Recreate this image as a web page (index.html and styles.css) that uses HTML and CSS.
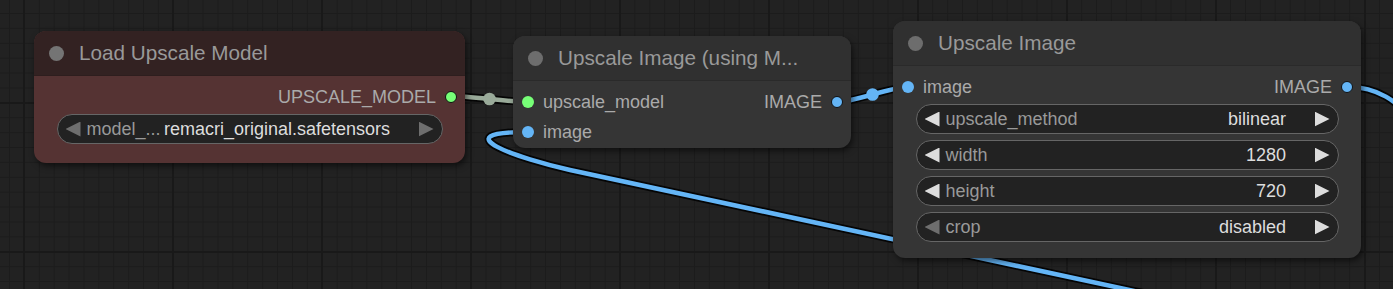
FILE: index.html
```html
<!DOCTYPE html>
<html>
<head>
<meta charset="utf-8">
<link rel="stylesheet" href="styles.css">
</head>
<body>
<div class="canvas">
  <svg class="links" width="1393" height="289" viewBox="0 0 1393 289">
    <g fill="none" stroke-linecap="round">
      <path class="edge" d="M528,132 C440,132 520,159 570,170 L1400,348"/>
      <path class="wire blue-w" d="M528,132 C440,132 520,159 570,170 L1400,348"/>
      <path class="edge" d="M451,96 C470,96 509,102 528,102"/>
      <path class="wire gray-w" d="M451,96 C470,96 509,102 528,102"/>
      <path class="edge" d="M837,102 C855,102 890,87 908,87"/>
      <path class="wire blue-w" d="M837,102 C855,102 890,87 908,87"/>
      <path class="edge" d="M1348,87 C1378,87 1395,100 1420,125"/>
      <path class="wire blue-w" d="M1348,87 C1378,87 1395,100 1420,125"/>
    </g>
    <circle class="marker gray-m" cx="489.5" cy="99" r="6.3"/>
    <circle class="marker blue-m" cx="872.5" cy="94.5" r="6.3"/>
  </svg>

  <div class="node red n1">
    <div class="title"><span class="tdot"></span><span class="ttext">Load Upscale Model</span></div>
    <div class="body">
      <div class="row">
        <div class="out"><span class="label">UPSCALE_MODEL</span><span class="dot green ring"></span></div>
      </div>
      <div class="widgets">
        <div class="widget">
          <span class="arrow l dim"></span>
          <span class="wlabel">model_...</span>
          <span class="wvalue">remacri_original.safetensors</span>
          <span class="arrow r dim"></span>
        </div>
      </div>
    </div>
  </div>

  <div class="node n2">
    <div class="title"><span class="tdot"></span><span class="ttext">Upscale Image (using M...</span></div>
    <div class="body">
      <div class="row">
        <div class="in"><span class="dot green"></span><span class="label">upscale_model</span></div>
        <div class="out"><span class="label">IMAGE</span><span class="dot blue ring"></span></div>
      </div>
      <div class="row">
        <div class="in"><span class="dot blue"></span><span class="label">image</span></div>
      </div>
    </div>
  </div>

  <div class="node n3">
    <div class="title"><span class="tdot"></span><span class="ttext">Upscale Image</span></div>
    <div class="body">
      <div class="row">
        <div class="in"><span class="dot blue"></span><span class="label">image</span></div>
        <div class="out"><span class="label">IMAGE</span><span class="dot blue ring"></span></div>
      </div>
      <div class="widgets">
        <div class="widget">
          <span class="arrow l"></span>
          <span class="wlabel">upscale_method</span>
          <span class="wvalue">bilinear</span>
          <span class="arrow r"></span>
        </div>
        <div class="widget">
          <span class="arrow l"></span>
          <span class="wlabel">width</span>
          <span class="wvalue">1280</span>
          <span class="arrow r"></span>
        </div>
        <div class="widget">
          <span class="arrow l"></span>
          <span class="wlabel">height</span>
          <span class="wvalue">720</span>
          <span class="arrow r"></span>
        </div>
        <div class="widget">
          <span class="arrow l dim"></span>
          <span class="wlabel">crop</span>
          <span class="wvalue">disabled</span>
          <span class="arrow r"></span>
        </div>
      </div>
    </div>
  </div>
</div>
</body>
</html>
```

FILE: styles.css
```css
html, body {
  margin: 0;
  padding: 0;
  background: #222;
}

.canvas {
  position: relative;
  width: 1393px;
  height: 289px;
  overflow: hidden;
  background-color: #222222;
  background-image:
    linear-gradient(to right, #191919 2px, transparent 2px),
    linear-gradient(to bottom, #191919 2px, transparent 2px),
    linear-gradient(to right, #1c1c1c 1px, transparent 1px),
    linear-gradient(to bottom, #1c1c1c 1px, transparent 1px);
  background-size: 149px 149px, 149px 149px, 14.9px 14.9px, 14.9px 14.9px;
  background-position: 23px 0, 0 102px, 9px 0, 0 13px;
  font-family: Arial, "Liberation Sans", sans-serif;
}

.links {
  position: absolute;
  left: 0;
  top: 0;
}

.edge {
  stroke: rgba(0, 0, 0, 0.85);
  stroke-width: 8;
}

.wire {
  stroke-width: 4.5;
}

.blue-w { stroke: #64b5f6; }
.gray-w { stroke: #99aa99; }

.marker { stroke: none; }
.blue-m { fill: #64b5f6; }
.gray-m { fill: #99aa99; }

.node {
  position: absolute;
  box-sizing: border-box;
  border-radius: 12px;
  background: #353535;
  box-shadow: 2px 3px 6px rgba(0, 0, 0, 0.55);
  z-index: 1;
}

.n1 { left: 34px; top: 31px; width: 431px; height: 132px; }
.n2 { left: 513px; top: 36px; width: 338px; height: 112px; }
.n3 { left: 893px; top: 21px; width: 468px; height: 237px; }

.title {
  height: 45px;
  box-sizing: border-box;
  display: flex;
  align-items: center;
  gap: 15px;
  padding-left: 15px;
  background: #303030;
  border-bottom: 1px solid #2a2a2a;
  border-radius: 12px 12px 0 0;
}

.tdot {
  flex: none;
  width: 15px;
  height: 15px;
  border-radius: 50%;
  background: #6d6d6d;
}

.ttext {
  font-size: 20.7px;
  color: #999;
  white-space: nowrap;
}

.red { background: #553333; }
.red .title {
  background: #332222;
  border-bottom-color: #2e1e1e;
}
.red .tdot { background: #747474; }

.body {
  display: flex;
  flex-direction: column;
  padding-top: 6px;
}

.row {
  height: 30px;
  display: flex;
  align-items: center;
  padding: 0 8px 0 9px;
  font-size: 18px;
  color: #aaa;
}

.in, .out {
  display: flex;
  align-items: center;
  gap: 9px;
  white-space: nowrap;
}

.out { margin-left: auto; }

.dot {
  flex: none;
  width: 12px;
  height: 12px;
  box-sizing: border-box;
  border-radius: 50%;
}

.green { background: #77ff77; }
.blue { background: #64b5f6; }
.ring { border: 1.5px solid #111; }

.widgets {
  display: flex;
  flex-direction: column;
  gap: 6px;
  padding: 2px 22.5px 0;
}

.widget {
  height: 30px;
  box-sizing: border-box;
  display: flex;
  align-items: center;
  padding: 0 8px;
  border: 1px solid #666;
  border-radius: 15px;
  background: #222;
  font-size: 18px;
}

.arrow {
  flex: none;
  width: 15px;
  height: 15px;
  background: #dddddd;
}

.arrow.l { clip-path: polygon(100% 0, 0 50%, 100% 100%); }
.arrow.r {
  clip-path: polygon(0 0, 100% 50%, 0 100%);
  margin-left: 28.5px;
}
.arrow.dim { background: #6e6e6e; }

.wlabel {
  margin-left: 6px;
  color: #999;
  white-space: nowrap;
}

.wvalue {
  margin-left: auto;
  color: #ddd;
  white-space: nowrap;
}
```
